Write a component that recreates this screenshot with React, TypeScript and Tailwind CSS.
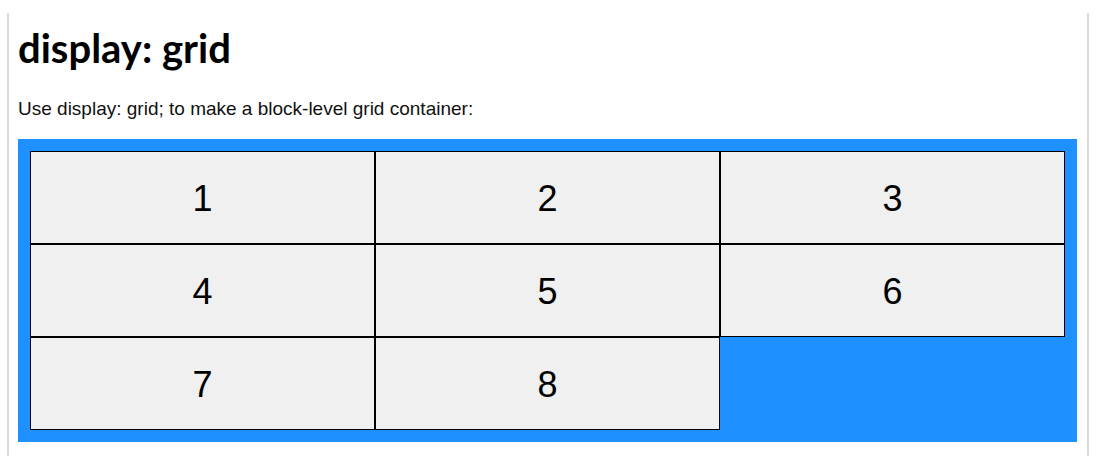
const ITEMS = ["1", "2", "3", "4", "5", "6", "7", "8"];

export default function App() {
  return (
    <div className="bg-white w-[1102px] h-[476px] pt-[13px] pl-[7px]">
      <div className="w-[1082px] h-[443px] border-x-2 border-[#d9d9d9] pt-[11px] pl-[9px] pr-[10px]">
        <h1 className="text-[40px] leading-[48px] font-bold text-black font-['Lato','Liberation_Sans',sans-serif]">
          display: grid
        </h1>
        <p className="mt-[26px] text-[19px] leading-[22px] text-[#111] font-['Liberation_Sans',Arial,sans-serif]">
          Use display: grid; to make a block-level grid container:
        </p>
        <div className="mt-[19px] grid grid-cols-3 bg-[#1e90ff] p-[12px]">
          {ITEMS.map((n) => (
            <div
              key={n}
              className="h-[93px] pt-[3px] flex items-center justify-center border border-black bg-[#f0f0f0] text-[36px] text-black font-['Liberation_Sans',Arial,sans-serif]"
            >
              {n}
            </div>
          ))}
        </div>
      </div>
    </div>
  );
}
